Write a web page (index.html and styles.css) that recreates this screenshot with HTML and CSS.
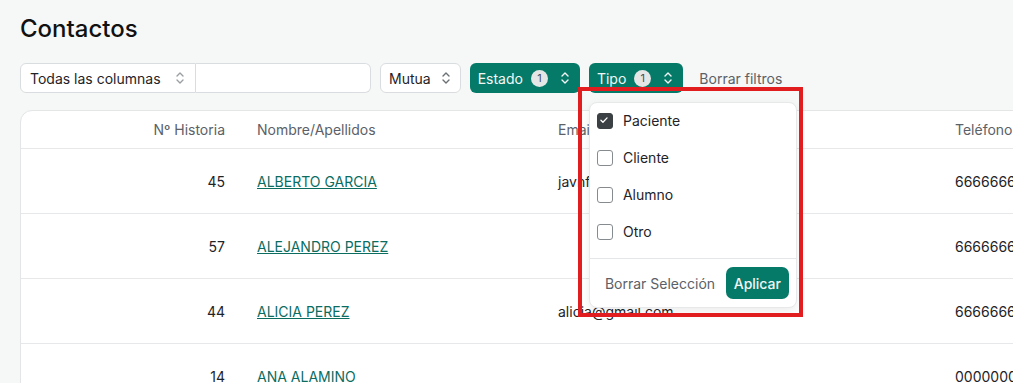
FILE: index.html
```html
<!DOCTYPE html>
<html lang="es">
<head>
    <meta charset="UTF-8">
    <meta name="viewport" content="width=device-width, initial-scale=1.0">
    <title>Contactos</title>
    <link rel="stylesheet" href="styles.css">
</head>
<body>
    <h1 class="page-title">Contactos</h1>

    <!-- Barra de filtros -->
    <div class="filters">
        <div class="search-group">
            <button class="select-btn select-cols">
                <span>Todas las columnas</span>
                <svg class="chev" viewBox="0 0 10 14"><path d="M2 5l3-3 3 3M2 9l3 3 3-3"/></svg>
            </button>
            <input type="text" class="search-input">
        </div>
        <button class="select-btn">
            <span>Mutua</span>
            <svg class="chev" viewBox="0 0 10 14"><path d="M2 5l3-3 3 3M2 9l3 3 3-3"/></svg>
        </button>
        <button class="filter-btn">
            <span>Estado</span>
            <span class="badge">1</span>
            <svg class="chev" viewBox="0 0 10 14"><path d="M2 5l3-3 3 3M2 9l3 3 3-3"/></svg>
        </button>
        <div class="filter-wrap">
            <button class="filter-btn">
                <span>Tipo</span>
                <span class="badge">1</span>
                <svg class="chev" viewBox="0 0 10 14"><path d="M2 5l3-3 3 3M2 9l3 3 3-3"/></svg>
            </button>

            <!-- Menú desplegable del filtro Tipo -->
            <div class="dropdown">
                <ul class="option-list">
                    <li class="option"><span class="check checked"><svg viewBox="0 0 16 16"><path d="M4.5 8.2l2.3 2.3 4.7-4.9"/></svg></span>Paciente</li>
                    <li class="option"><span class="check"></span>Cliente</li>
                    <li class="option"><span class="check"></span>Alumno</li>
                    <li class="option"><span class="check"></span>Otro</li>
                </ul>
                <div class="dropdown-footer">
                    <button class="link-btn">Borrar Selección</button>
                    <button class="apply-btn">Aplicar</button>
                </div>
            </div>
            <div class="highlight"></div>
        </div>
        <button class="link-btn clear-filters">Borrar filtros</button>
    </div>

    <!-- Tabla de contactos -->
    <div class="table-card">
        <table class="contacts">
            <thead>
                <tr>
                    <th class="col-num">Nº Historia</th>
                    <th class="col-name">Nombre/Apellidos</th>
                    <th class="col-email">Email</th>
                    <th class="col-phone">Teléfono</th>
                </tr>
            </thead>
            <tbody>
                <tr>
                    <td class="col-num">45</td>
                    <td><a href="#">ALBERTO GARCIA</a></td>
                    <td>javnf@gmail.com</td>
                    <td>666666666</td>
                </tr>
                <tr>
                    <td class="col-num">57</td>
                    <td><a href="#">ALEJANDRO PEREZ</a></td>
                    <td></td>
                    <td>666666666</td>
                </tr>
                <tr>
                    <td class="col-num">44</td>
                    <td><a href="#">ALICIA PEREZ</a></td>
                    <td>alicia@gmail.com</td>
                    <td>666666666</td>
                </tr>
                <tr>
                    <td class="col-num">14</td>
                    <td><a href="#">ANA ALAMINO</a></td>
                    <td></td>
                    <td>000000000</td>
                </tr>
            </tbody>
        </table>
    </div>
</body>
</html>
```

FILE: styles.css
```css
body {
    margin: 0;
    padding: 13px 20px 0;
    font-family: 'Inter', 'Noto Sans', sans-serif;
    font-size: 14px;
    color: #1f2328;
    background-color: #f6f7f7;
    overflow: hidden;
}
.page-title {
    margin: 0;
    font-size: 24px;
    line-height: 32px;
    font-weight: 500;
    color: #111;
}
.filters {
    display: flex;
    align-items: center;
    gap: 9px;
    margin-top: 18px;
    height: 30px;
}
button {
    font-family: inherit;
    font-size: 14px;
    white-space: nowrap;
    cursor: pointer;
}
.chev {
    flex-shrink: 0;
    width: 10px;
    height: 14px;
    fill: none;
    stroke: currentColor;
    stroke-width: 1.4;
    stroke-linecap: round;
    stroke-linejoin: round;
}
.search-group {
    display: flex;
    height: 30px;
}
.select-btn {
    display: flex;
    align-items: center;
    justify-content: space-between;
    gap: 10px;
    height: 30px;
    padding: 0 9px 0 8px;
    background: white;
    border: 1px solid #dadddf;
    border-radius: 6px;
    color: #1f2328;
    text-align: left;
}
.select-btn .chev {
    color: #6b7075;
}
.select-cols {
    width: 176px;
    padding-left: 9px;
    padding-right: 10px;
    border-radius: 6px 0 0 6px;
}
.select-cols .chev {
    color: #9a9fa3;
}
.search-input {
    width: 175px;
    height: 30px;
    box-sizing: border-box;
    border: 1px solid #dadddf;
    border-left: none;
    border-radius: 0 6px 6px 0;
    background: white;
    outline: none;
}
.filter-btn {
    display: flex;
    align-items: center;
    height: 30px;
    padding: 0 10px 0 8px;
    background: #067a69;
    color: #f2f7f6;
    border: none;
    border-radius: 6px;
}
.badge {
    display: inline-flex;
    align-items: center;
    justify-content: center;
    width: 17px;
    height: 17px;
    margin: 0 12px 0 8px;
    border-radius: 50%;
    background: #e4e7e6;
    color: #4a4f53;
    font-size: 11px;
}
.filter-wrap {
    position: relative;
}
.link-btn {
    background: none;
    border: none;
    padding: 0 8px;
    color: #5b6167;
}
.clear-filters {
    margin-left: -1px;
}

/* Desplegable */
.dropdown {
    position: absolute;
    top: 39px;
    left: 0;
    z-index: 5;
    width: 206px;
    background: white;
    border: 1px solid #e6e8e9;
    border-radius: 8px;
    box-shadow: 0px 3px 10px rgba(0, 0, 0, 0.08);
}
.option-list {
    list-style: none;
    margin: 0;
    padding: 0 7px 7px;
}
.option {
    display: flex;
    align-items: center;
    gap: 10px;
    height: 37px;
    margin-top: -1px;
    margin-bottom: 1px;
    color: #1f2328;
}
.check {
    display: flex;
    width: 16px;
    height: 16px;
    box-sizing: border-box;
    border: 1.7px solid #868b90;
    border-radius: 3px;
}
.check.checked {
    background: #3b4044;
    border-color: #3b4044;
}
.check svg {
    width: 14px;
    height: 14px;
    margin: -0.5px;
    fill: none;
    stroke: white;
    stroke-width: 1.5;
    stroke-linecap: round;
    stroke-linejoin: round;
}
.dropdown-footer {
    display: flex;
    align-items: center;
    justify-content: space-between;
    padding: 8px 7px 8px 7px;
    border-top: 1px solid #e4e6e7;
}
.apply-btn {
    height: 32px;
    padding: 0 8px;
    background: #067a69;
    color: #f2f7f6;
    border: none;
    border-radius: 7px;
    font-weight: 500;
}
.highlight {
    position: absolute;
    top: 24px;
    left: -11px;
    z-index: 6;
    width: 225px;
    height: 230px;
    box-sizing: border-box;
    border: 4px solid #e11d1f;
    pointer-events: none;
}

/* Tabla */
.table-card {
    width: 1100px;
    margin-top: 17px;
    background: white;
    border: 1px solid #e3e5e6;
    border-radius: 12px;
}
.contacts {
    border-collapse: collapse;
    width: 100%;
    table-layout: fixed;
}
.contacts th {
    height: 37px;
    padding: 0 16px;
    text-align: left;
    font-weight: 400;
    color: #5b6167;
}
.contacts td {
    height: 64px;
    padding: 0 16px;
    border-top: 1px solid #e6e8e9;
}
.contacts .col-num {
    width: 188px;
    text-align: right;
}
.col-name {
    width: 269px;
}
.col-email {
    width: 365px;
}
.contacts a {
    color: #0a6d5f;
}
```
